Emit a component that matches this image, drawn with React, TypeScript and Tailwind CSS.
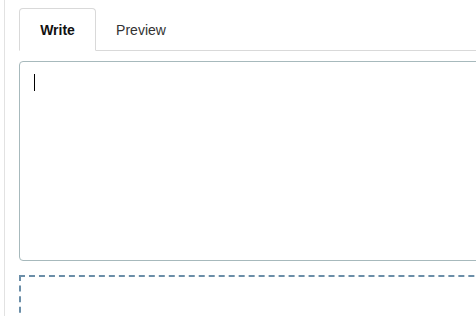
import { useState } from "react";

export default function App() {
  const [tab, setTab] = useState<"write" | "preview">("write");
  const [text, setText] = useState("");

  return (
    <div className="w-[476px] h-[316px] overflow-hidden bg-white" style={{ fontFamily: '"Liberation Sans", Arial, sans-serif' }}>
      <div className="ml-[4px] h-full border-l border-[#e2e2e2] pl-[14px] pt-[8px] w-[700px]">
        {/* Tabs */}
        <div className="flex border-b border-[#d9d9d9] h-[43px]">
          <button
            onClick={() => setTab("write")}
            className={
              tab === "write"
                ? "w-[77px] h-[43px] pt-[2px] -mb-px bg-white border border-[#d9d9d9] border-b-white rounded-t-[4px] text-[14px] font-bold text-[#111]"
                : "w-[77px] h-[43px] pt-[2px] text-[14px] text-[#333]"
            }
          >
            Write
          </button>
          <button
            onClick={() => setTab("preview")}
            className={
              tab === "preview"
                ? "w-[90px] h-[43px] pt-[2px] -mb-px bg-white border border-[#d9d9d9] border-b-white rounded-t-[4px] text-[14px] font-bold text-[#111]"
                : "w-[90px] h-[43px] pt-[2px] text-[14px] text-[#333]"
            }
          >
            Preview
          </button>
        </div>

        {/* Editor */}
        <div className="relative mt-[10px]">
          <textarea
            autoFocus
            value={text}
            onChange={(e) => setText(e.target.value)}
            className="block w-full h-[200px] resize-none border border-[#a7b9bc] rounded-[4px] px-[14px] py-[12px] text-[14px] leading-[18px] text-[#111] outline-none caret-black"
          />
          {text === "" && (
            <span className="pointer-events-none absolute left-[15px] top-[13px] h-[17px] w-px bg-black" />
          )}
        </div>

        {/* Drop zone */}
        <div className="mt-[14px] h-[80px] w-full border-2 border-dashed border-[#6b8ea8]" />
      </div>
    </div>
  );
}
